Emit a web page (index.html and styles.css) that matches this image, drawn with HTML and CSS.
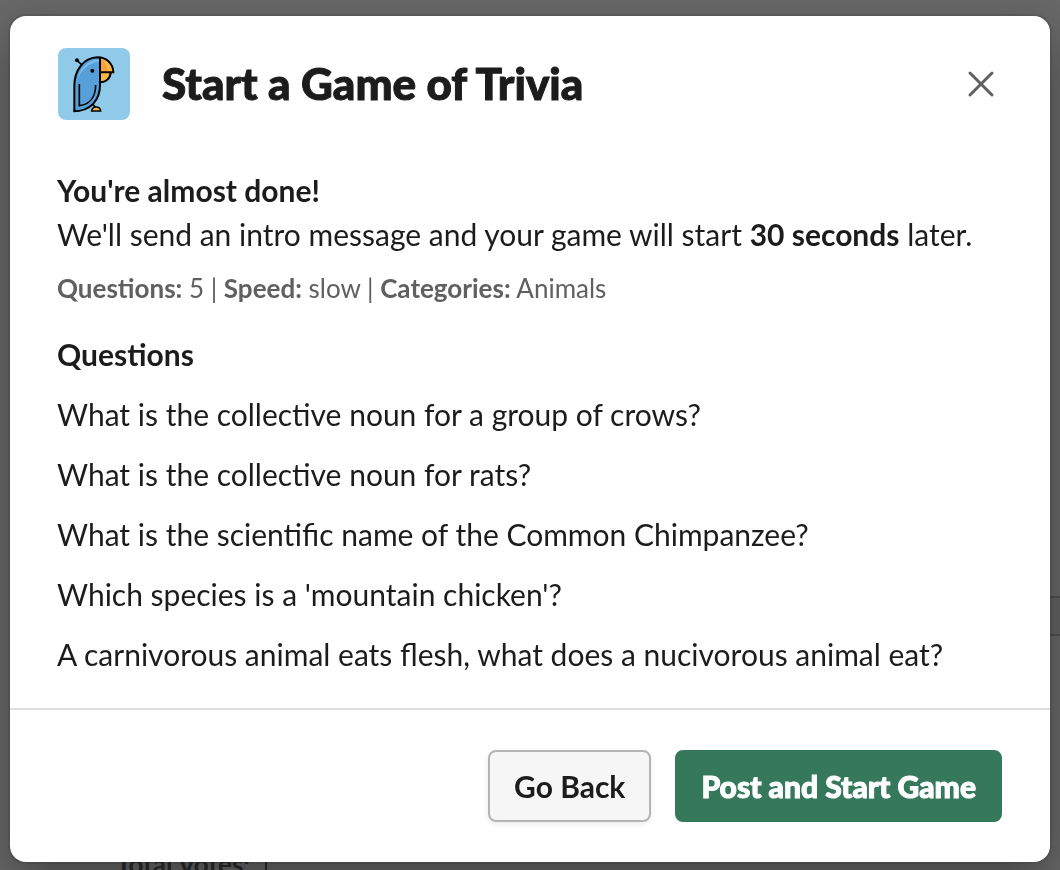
FILE: index.html
```html
<!DOCTYPE html>
<html lang="en">
<head>
    <meta charset="UTF-8">
    <meta name="viewport" content="width=device-width, initial-scale=1.0">
    <title>Start a Game of Trivia</title>
    <link rel="stylesheet" href="styles.css">
</head>
<body>

    <!-- Channel behind the dialog -->
    <div class="channel" aria-hidden="true">
        <div class="message-bar"></div>
        <p class="votes">Total Votes: <span class="votes-line"></span></p>
    </div>

    <div class="overlay">
        <section class="modal" role="dialog" aria-labelledby="modalTitle">
            <header class="modal-header">
                <svg class="app-icon" viewBox="24 24 216 216" aria-hidden="true">
                    <rect x="24" y="24" width="216" height="216" fill="#90cae9"/>
                    <path d="M73 213 V134 C73 92 97 53 140 52 H150 V130 C153 170 128 214 82 214 Z" fill="#569fd9"/>
                    <path d="M82 122 C86 90 110 60 148 58 V64 C114 70 92 92 82 122 Z" fill="#7dbbe8"/>
                    <path d="M90 194 C116 192 134 172 138 140 C144 166 124 194 90 200 Z" fill="#8ccaf0"/>
                    <path d="M150 55 C172 56 188 73 190 96 H150 Z" fill="#fbb649"/>
                    <path d="M150 55 C163 63 172 77 173 94 H150 Z" fill="#f6a23d"/>
                    <path d="M150 96 H181 C181 113 168 125 150 126 Z" fill="#fbb649"/>
                    <g fill="none" stroke="#000" stroke-width="6">
                        <path d="M73 214 V138 C73 92 99 53 143 52 C170 52 190 72 190 97 H150"/>
                        <path d="M150 54 V136 C150 180 122 214 70 214"/>
                        <path d="M182 98 C181 115 168 127 150 127"/>
                        <path d="M88 132 V197 C117 194 137 174 137 135" stroke-width="5"/>
                        <path d="M81 61 L96 75" stroke-width="5"/>
                        <path d="M128 193 L137 202" stroke-width="5"/>
                        <path d="M125 213 C127 197 150 197 152 213 Z" fill="#fbb649" stroke-width="5"/>
                    </g>
                    <circle cx="81" cy="61" r="6"/>
                    <circle cx="127" cy="92" r="6"/>
                </svg>
                <h1 id="modalTitle">Start a Game of Trivia</h1>
                <button type="button" class="close-btn" aria-label="Close">
                    <svg viewBox="0 0 28 28" aria-hidden="true">
                        <path d="M3 3 L25 25 M25 3 L3 25"/>
                    </svg>
                </button>
            </header>

            <div class="modal-body">
                <p><strong>You're almost done!</strong><br>
                We'll send an intro message and your game will start <strong>30 seconds</strong> later.</p>

                <p class="context"><strong>Questions:</strong> 5 | <strong>Speed:</strong> slow | <strong>Categories:</strong> Animals</p>

                <h2>Questions</h2>
                <ul class="question-list">
                    <li>What is the collective noun for a group of crows?</li>
                    <li>What is the collective noun for rats?</li>
                    <li>What is the scientific name of the Common Chimpanzee?</li>
                    <li>Which species is a 'mountain chicken'?</li>
                    <li>A carnivorous animal eats flesh, what does a nucivorous animal eat?</li>
                </ul>
            </div>

            <footer class="modal-footer">
                <button type="button" class="btn btn-outline">Go Back</button>
                <button type="button" class="btn btn-primary">Post and Start Game</button>
            </footer>
        </section>
    </div>

</body>
</html>
```
FILE: styles.css
```css
* {
    box-sizing: border-box;
}
body {
    margin: 0;
    font-family: Lato, sans-serif;
    font-size: 30px;
    line-height: 44px;
    color: #1d1c1d;
    background-color: #686868;
}
h1, h2, p, ul {
    margin: 0;
    padding: 0;
}

/* Channel behind the dialog */
.channel {
    height: 100vh;
    padding-top: 596px;
    overflow: hidden;
}
.message-bar {
    height: 40px;
    margin-left: 120px;
    background-color: #626262;
    border-top: 2px solid #505050;
    border-bottom: 2px solid #505050;
}
.votes {
    display: flex;
    gap: 15px;
    padding: 212px 0 0 116px;
    font-size: 26px;
    font-weight: 700;
    line-height: 32px;
    color: #2b2b2b;
}
.votes-line {
    width: 2px;
    margin-top: 8px;
    background-color: #2b2b2b;
}

/* Dialog */
.overlay {
    position: fixed;
    inset: 0;
    padding: 16px 10px 8px;
}
.modal {
    background-color: #fff;
    border-radius: 16px;
    box-shadow: 0 0 0 2px rgba(29, 28, 29, 0.13), 0 18px 48px rgba(0, 0, 0, 0.35);
}
.modal-header {
    display: flex;
    align-items: center;
    padding: 32px 48px;
}
.app-icon {
    width: 72px;
    height: 72px;
    margin-right: 32px;
    border-radius: 8px;
}
h1 {
    flex: 1;
    padding-bottom: 2px;
    font-size: 44px;
    font-weight: 900;
    line-height: 60px;
    -webkit-text-stroke: 1px #1d1c1d;
}
.close-btn {
    display: flex;
    padding: 7px;
    border: none;
    background: none;
    cursor: pointer;
}
.close-btn svg {
    width: 28px;
    height: 28px;
    fill: none;
    stroke: #616061;
    stroke-width: 3;
    stroke-linecap: round;
}
.modal-body {
    padding: 16px 47px 32px;
}
.context {
    margin: 14px 0 26px;
    font-size: 26px;
    line-height: 36px;
    color: #616061;
}
h2 {
    font-size: 30px;
    font-weight: 700;
}
.question-list {
    list-style: none;
}
.question-list li {
    margin-top: 16px;
}

/* Buttons */
.modal-footer {
    display: flex;
    justify-content: flex-end;
    gap: 24px;
    padding: 40px 48px;
    border-top: 2px solid #ddd;
}
.btn {
    height: 72px;
    padding: 0 24px;
    border: 2px solid transparent;
    border-radius: 8px;
    font-family: inherit;
    font-size: 30px;
    font-weight: 700;
    cursor: pointer;
}
.btn-outline {
    background-color: #f6f6f6;
    border-color: #b4b4b4;
    color: #1d1c1d;
    box-shadow: 0 2px 6px rgba(0, 0, 0, 0.08);
}
.btn-primary {
    background-color: #35785b;
    border-color: #35785b;
    font-weight: 900;
    color: #fff;
    -webkit-text-stroke: 1px #fff;
}
```
